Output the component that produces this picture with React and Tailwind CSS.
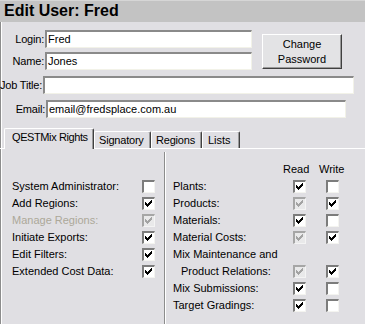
import React from "react";

function CheckMark({ color }) {
  const px = [
    [6, 0, 1], [5, 1, 2], [0, 2, 1], [4, 2, 3], [0, 3, 2], [3, 3, 3],
    [0, 4, 5], [1, 5, 3], [2, 6, 1],
  ];
  return (
    <svg width="7" height="7" viewBox="0 0 7 7" shapeRendering="crispEdges" className="absolute left-[1px] top-[1px]">
      {px.map(([x, y, w], i) => (
        <rect key={i} x={x} y={y} width={w} height="1" fill={color} />
      ))}
    </svg>
  );
}

function Box({ checked, disabled }) {
  return (
    <span
      className={
        disabled
          ? "relative inline-block w-[13px] h-[13px] shrink-0 border-t-2 border-l-2 border-r border-b border-t-[#a6a6a6] border-l-[#a6a6a6] border-r-[#f4f4f4] border-b-[#f4f4f4] bg-[#e9e9ea]"
          : "relative inline-block w-[13px] h-[13px] shrink-0 border-t-2 border-l-2 border-r border-b border-t-[#7c7c7c] border-l-[#7c7c7c] border-r-[#f4f4f0] border-b-[#f4f4f0] bg-white"
      }
    >
      {checked && <CheckMark color={disabled ? "#a3a3a3" : "#000000"} />}
    </span>
  );
}

function Field({ labelW, label, inputW, value }) {
  return (
    <div className="flex items-center h-[18px]">
      <span className="text-right pr-[1px] whitespace-nowrap tracking-[-0.2px]" style={{ width: labelW }}>{label}</span>
      <div
        className="h-[18px] bg-white border-t-2 border-l-2 border-r border-b border-t-[#8a8a8a] border-l-[#8a8a8a] border-r-[#f2f2e8] border-b-[#f2f2e8] pl-[1px] leading-[14px] whitespace-nowrap overflow-hidden"
        style={{ width: inputW }}
      >
        {value}
      </div>
    </div>
  );
}

function LeftRow({ label, checked, disabled }) {
  return (
    <div className="flex items-center justify-between h-[17px] pl-[12px] pr-[9px]">
      <span className={disabled ? "text-[#aca899]" : "text-black"}>{label}</span>
      <Box checked={checked} disabled={disabled} />
    </div>
  );
}

function RightRow({ label, read, readDis, write, indent }) {
  return (
    <div className="flex items-center h-[17px] pl-[7px]">
      <span className={indent ? "w-[120px] pl-[8px] whitespace-nowrap" : "w-[120px] whitespace-nowrap"}>{label}</span>
      <Box checked={read} disabled={readDis} />
      <span className="w-[20px]" />
      <Box checked={write} />
    </div>
  );
}

export default function App() {
  return (
    <div
      className="w-[365px] h-[324px] overflow-hidden bg-[#e0dfe3] text-[11px] text-black"
      style={{ fontFamily: '"Liberation Sans", Arial, sans-serif' }}
    >
      <div className="h-[22px] bg-[#c3c3c3] border-t border-t-[#d6d6d6] pl-[4px] text-[16px] font-bold leading-[20px]">
        Edit User: Fred
      </div>
      <div className="h-[302px] shadow-[inset_1px_0_0_#8c8c8c,inset_2px_0_0_#ffffff] flex flex-col">
        <div className="pt-[8px]">
          <div className="flex">
            <div className="flex flex-col gap-[4px]">
              <Field labelW={45} label="Login:" inputW={207} value="Fred" />
              <Field labelW={45} label="Name:" inputW={207} value="Jones" />
            </div>
            <div className="ml-[10px] mt-[4px] w-[80px] h-[35px] border-t border-l border-t-white border-l-white border-r border-b border-r-[#404040] border-b-[#404040] shadow-[inset_-1px_-1px_0_#9a9a9a] bg-[#e3e3e5] flex flex-col items-center justify-center leading-[15px]">
              <span>Change</span>
              <span>Password</span>
            </div>
          </div>
          <div className="mt-[6px]">
            <Field labelW={43} label="Job Title:" inputW={311} value="" />
          </div>
          <div className="mt-[6px]">
            <Field labelW={46} label="Email:" inputW={300} value="email@fredsplace.com.au" />
          </div>
        </div>

        <div className="mt-[10px] flex items-end h-[20px] pl-[4px] whitespace-nowrap">
          <div className="relative z-10 w-[90px] h-[21px] -mb-[1px] bg-[#e0dfe3] border-t border-l border-t-white border-l-white border-r border-r-[#404040] shadow-[inset_-1px_0_0_#9a9a9a] rounded-tl-[2px] rounded-tr-[2px] pl-[7px] pt-[2px] leading-[13px] tracking-[-0.4px]">
            QESTMix Rights
          </div>
          <div className="w-[57px] h-[17px] border-t border-l border-t-white border-l-white border-r border-r-[#404040] shadow-[inset_-1px_0_0_#9a9a9a] rounded-tl-[2px] rounded-tr-[2px] pl-[4px] pt-[2px] leading-[13px] tracking-[-0.2px]">
            Signatory
          </div>
          <div className="w-[51px] h-[17px] border-t border-l border-t-white border-l-white border-r border-r-[#404040] shadow-[inset_-1px_0_0_#9a9a9a] rounded-tl-[2px] rounded-tr-[2px] pl-[4px] pt-[2px] leading-[13px] tracking-[-0.2px]">
            Regions
          </div>
          <div className="w-[38px] h-[17px] border-t border-l border-t-white border-l-white border-r border-r-[#404040] shadow-[inset_-1px_0_0_#9a9a9a] rounded-tl-[2px] rounded-tr-[2px] pl-[5px] pt-[2px] leading-[13px]">
            Lists
          </div>
        </div>

        <div className="flex-1 flex border-t border-t-white">
          <div className="w-[164px] pt-[29px]">
            <LeftRow label="System Administrator:" checked={false} />
            <LeftRow label="Add Regions:" checked />
            <LeftRow label="Manage Regions:" checked disabled />
            <LeftRow label="Initiate Exports:" checked />
            <LeftRow label="Edit Filters:" checked />
            <LeftRow label="Extended Cost Data:" checked />
          </div>
          <div className="mt-[3px] w-[2px] border-l border-l-[#8c8c8c] border-r border-r-white" />
          <div className="flex-1 pt-[12px]">
            <div className="flex items-center h-[17px] pl-[117px]">
              <span className="w-[36px]">Read</span>
              <span>Write</span>
            </div>
            <RightRow label="Plants:" read write={false} />
            <RightRow label="Products:" read readDis write />
            <RightRow label="Materials:" read write={false} />
            <RightRow label="Material Costs:" read readDis write />
            <div className="flex items-center h-[17px] pl-[7px]">Mix Maintenance and</div>
            <RightRow label="Product Relations:" read readDis write indent />
            <RightRow label="Mix Submissions:" read write={false} />
            <RightRow label="Target Gradings:" read write={false} />
          </div>
        </div>
      </div>
    </div>
  );
}
